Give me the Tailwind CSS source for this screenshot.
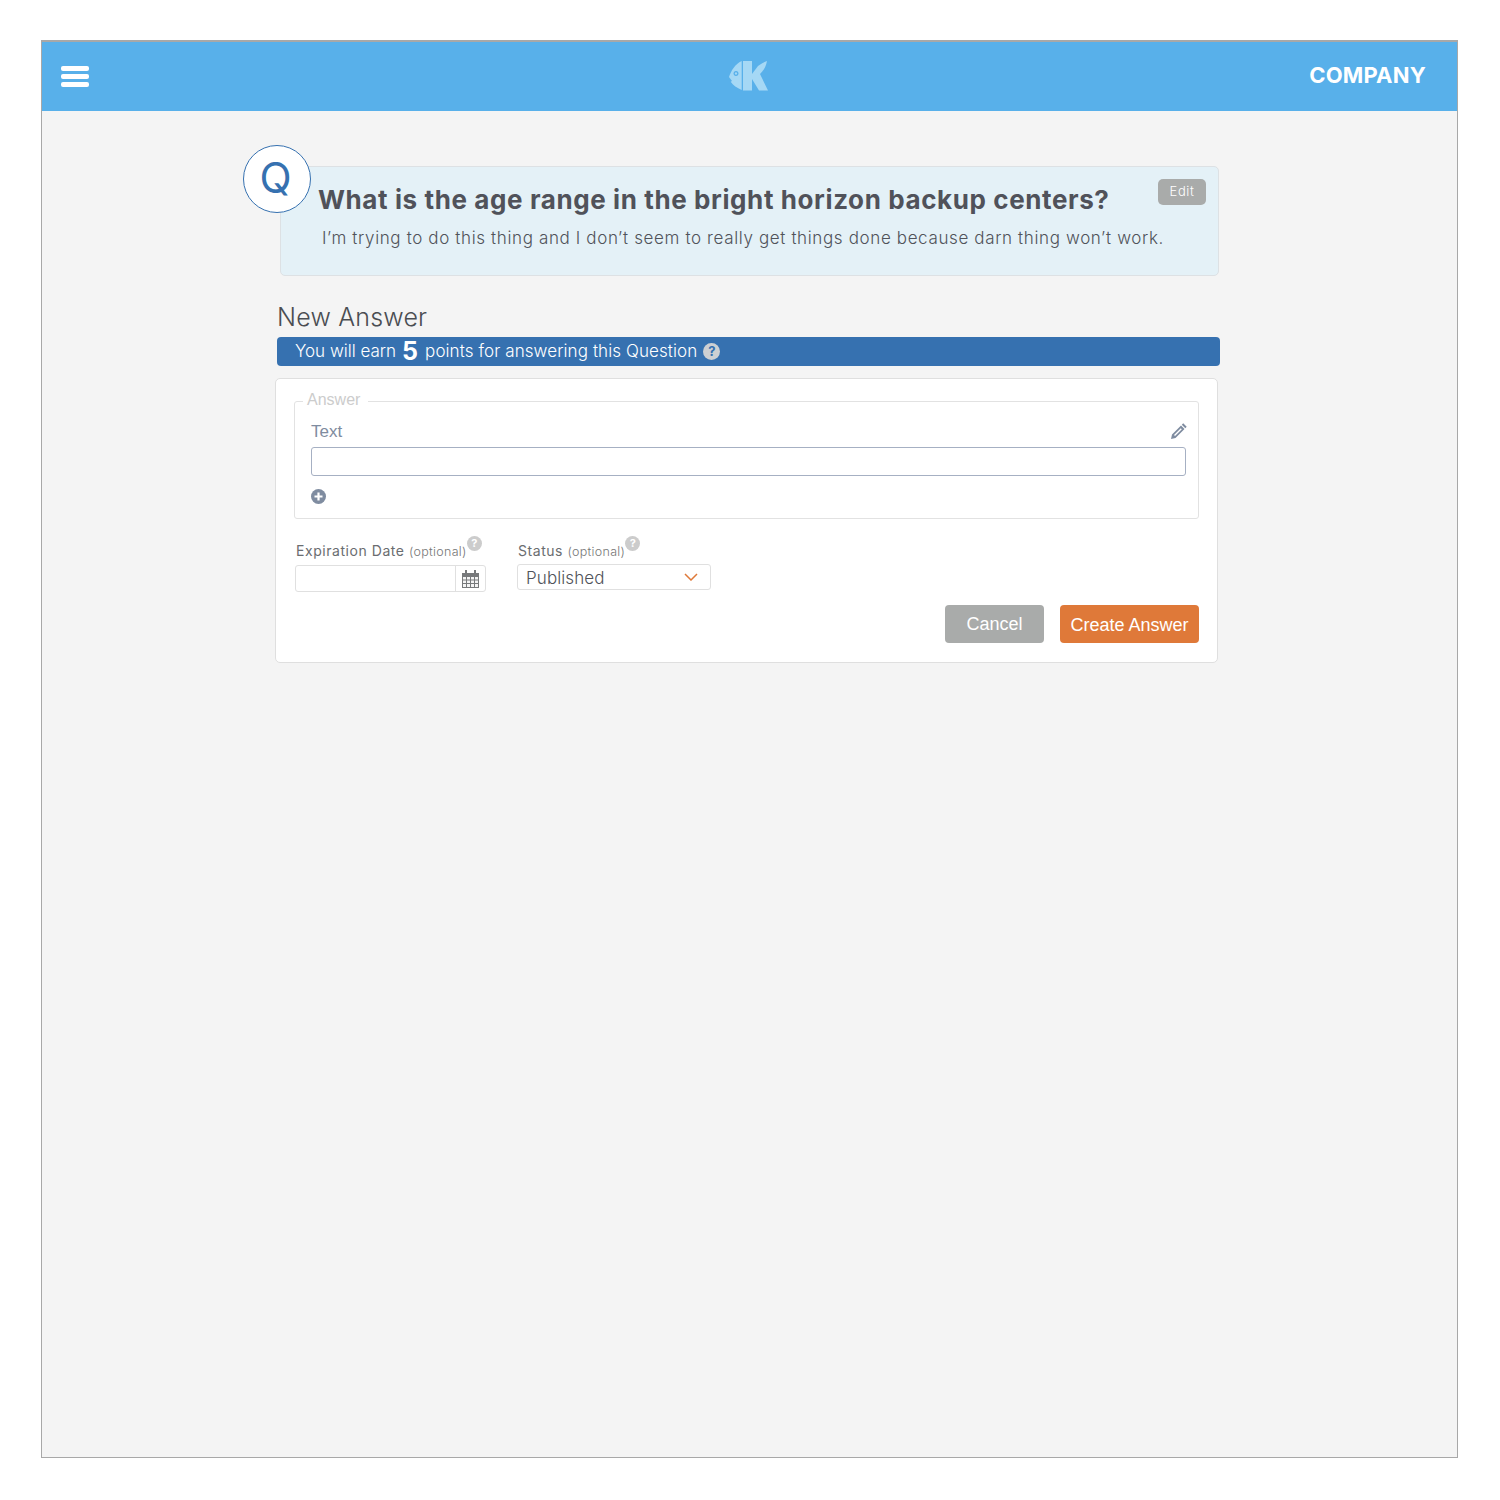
<!DOCTYPE html>
<html lang="en">
<head>
    <meta charset="UTF-8">
    <title>New Answer</title>
    <script src="https://cdn.jsdelivr.net/npm/@tailwindcss/browser@4"></script>
</head>
<body class="bg-white font-['Inter',sans-serif]">
    <div class="ml-[41px] mt-[40px] w-[1417px] h-[1418px] border border-t-2 border-[#a8a8a8] bg-[#f4f4f4] overflow-hidden">
        <header class="h-[69px] bg-[#58b0ea] grid grid-cols-3 items-center pl-[19px] pr-[31px]">
            <div class="flex flex-col gap-[3px] w-[28px]">
                <span class="h-[5px] rounded-[2px] bg-white"></span>
                <span class="h-[5px] rounded-[2px] bg-white"></span>
                <span class="h-[5px] rounded-[2px] bg-white"></span>
            </div>
            <svg class="w-[40px] h-[31px] justify-self-center mb-[2px] ml-[11px]" viewBox="0 0 40 31" fill="#a5d8f5">
                <path fill-rule="evenodd" d="M12.7 1C6 4 2 11 0 17L3 21L1.700 21.700C4 25 8 28 12.700 30ZM7 11a2.500 2.500 0 1 0 .01 0ZM7 12.300a1.200 1.200 0 1 1-.01 0Z"/>
                <path d="M14 1H23V14L29 6C32 4 35 2 38 1C37 7 34 11 31 14L39 30.500H30L23 19V30.500H14Z"/>
            </svg>
            <span class="justify-self-end mb-[3px] text-[22px] leading-none font-bold text-white tracking-[0.2px]">COMPANY</span>
        </header>

        <main class="ml-[233px] w-[945px]">
            <section class="relative ml-[5px] mt-[55px] w-[939px] h-[110px] rounded-[5px] border border-[#dde1e4] bg-[#e4f1f7] pl-[37px] pt-[17px]">
                <div class="absolute left-[-38px] top-[-22px] w-[68px] h-[68px] rounded-full border border-[#3671b0] bg-white flex items-center justify-center pr-[3px] pb-[2px] text-[42px] leading-none text-[#3671b0]">Q</div>
                <h1 class="text-[26px] leading-[32px] font-bold tracking-[0.6px] text-[#50525a] whitespace-nowrap">What is the age range in the bright horizon backup centers?</h1>
                <p class="mt-[10px] ml-[4px] text-[17px] leading-[24px] font-light tracking-[0.63px] text-[#50535a] whitespace-nowrap">I’m trying to do this thing and I don’t seem to really get things done because darn thing won’t work.</p>
                <button class="absolute right-[12px] top-[12px] w-[48px] h-[26px] rounded-[5px] bg-[#a9abaa] text-[13px] font-light tracking-[0.6px] text-white">Edit</button>
            </section>

            <h2 class="ml-[2px] mt-[25px] text-[25px] leading-[32px] font-light tracking-[0.2px] text-[#4a4d52] whitespace-nowrap">New Answer</h2>
            <div class="ml-[2px] mt-[4px] w-[943px] h-[29px] rounded-[4px] bg-[#3671b0] pl-[18px] flex items-center text-[17px] font-light text-white whitespace-nowrap">
                <span>You will earn</span>
                <span class="ml-[6px] mr-[7px] text-[25px] leading-none font-bold">5</span>
                <span class="tracking-[0.09px]">points for answering this Question</span>
                <span class="ml-[6px] w-[17px] h-[17px] rounded-full bg-[#cdd0d3] text-[#3671b0] text-[13px] leading-[17px] font-bold text-center">?</span>
            </div>

            <form class="mt-[12px] w-[943px] h-[285px] rounded-[5px] border border-[#dfdfdf] bg-white pl-[18px] pr-[18px]">
                <fieldset class="mt-[11px] w-[905px] h-[129px] rounded-[3px] border border-[#e2e2e2] pl-[16px] pr-[12px] font-['Liberation_Sans',sans-serif]">
                    <legend class="ml-[-8px] px-[4px] pr-[8px] pb-[2px] text-[16px] leading-[20px] text-[#cccccc]">Answer</legend>
                    <div class="mt-[10px] flex items-center justify-between">
                        <label class="text-[17px] leading-[20px] text-[#7f8ca0]">Text</label>
                        <svg class="w-[16px] h-[16px] mb-[2px] -mr-[1px]" viewBox="0 0 16 16" fill="#7f8ca0">
                            <path fill-rule="evenodd" d="M12.200 0.300 15.700 3.800 14.300 5.200 10.800 1.700ZM10 2.500 13.500 6 4.500 15 0 16 1 11.500ZM9.800 5.200 3 12 4 13 10.800 6.200Z"/>
                        </svg>
                    </div>
                    <input class="block mt-[5px] w-[875px] h-[29px] rounded-[3px] border border-[#a6b0c3] bg-white" type="text">
                    <svg class="mt-[13px] w-[15px] h-[15px]" viewBox="0 0 15 15">
                        <circle cx="7.500" cy="7.500" r="7.500" fill="#7f8ca0"/>
                        <path d="M7.500 3.500V11.500M3.500 7.500H11.500" stroke="#fff" stroke-width="2.200"/>
                    </svg>
                </fieldset>

                <div class="flex mt-[17px]">
                    <div class="ml-[1px] w-[191px]">
                        <div class="flex items-start h-[29px] pl-[1px]">
                            <label class="mt-[5px] text-[14px] leading-[20px] tracking-[0.55px] text-[#6a6d70] whitespace-nowrap">Expiration Date <span class="text-[12.500px] tracking-[0.3px] font-light text-[#777777]">(optional)</span></label>
                            <span class="shrink-0 w-[15px] h-[15px] rounded-full bg-[#cccccc] text-white text-[11px] leading-[15px] font-bold text-center">?</span>
                        </div>
                        <div class="flex h-[27px] rounded-[3px] border border-[#e0e0e0] bg-white">
                            <input class="w-[159px] h-full" type="text">
                            <span class="flex-1 border-l border-[#e0e0e0] flex items-center justify-center">
                                <svg class="w-[17px] h-[18px]" viewBox="0 0 17 18" fill="none" stroke="#77797b">
                                    <rect x="0.500" y="3.500" width="16" height="14" fill="#f4f4f4"/>
                                    <path d="M0.500 6.500H16.500M0.500 10H16.500M0.500 13.500H16.500M4.500 6.500V17.500M8.500 6.500V17.500M12.500 6.500V17.500"/>
                                    <path d="M0.500 3.500H16.500V6.500H0.500Z" fill="#77797b"/>
                                    <path d="M4 0V4M13 0V4" stroke-width="2"/>
                                </svg>
                            </span>
                        </div>
                    </div>
                    <div class="ml-[31px] w-[194px]">
                        <div class="flex items-start h-[28px] pl-[1px]">
                            <label class="mt-[5px] text-[14px] leading-[20px] tracking-[0.55px] text-[#6a6d70] whitespace-nowrap">Status <span class="text-[12.500px] tracking-[0.3px] font-light text-[#777777]">(optional)</span></label>
                            <span class="shrink-0 w-[15px] h-[15px] rounded-full bg-[#cccccc] text-white text-[11px] leading-[15px] font-bold text-center">?</span>
                        </div>
                        <div class="flex items-center justify-between h-[26px] rounded-[3px] border border-[#e0e0e0] bg-white pl-[8px] pr-[12px] pt-[3px] text-[17px] font-light tracking-[0.1px] text-[#50535a]">
                            <span>Published</span>
                            <svg class="w-[14px] h-[8px] mb-[3px]" viewBox="0 0 14 8" fill="none" stroke="#df7939" stroke-width="1.500"><path d="M1 1L7 7L13 1"/></svg>
                        </div>
                    </div>
                </div>

                <div class="flex justify-end gap-[16px] mt-[13px] font-['Liberation_Sans',sans-serif] text-[18px]">
                    <button class="w-[99px] h-[38px] rounded-[4px] bg-[#a9abaa] text-white" type="button">Cancel</button>
                    <button class="w-[139px] h-[38px] rounded-[4px] pt-[2px] bg-[#df7939] text-white" type="submit">Create Answer</button>
                </div>
            </form>
        </main>
    </div>
</body>
</html>
